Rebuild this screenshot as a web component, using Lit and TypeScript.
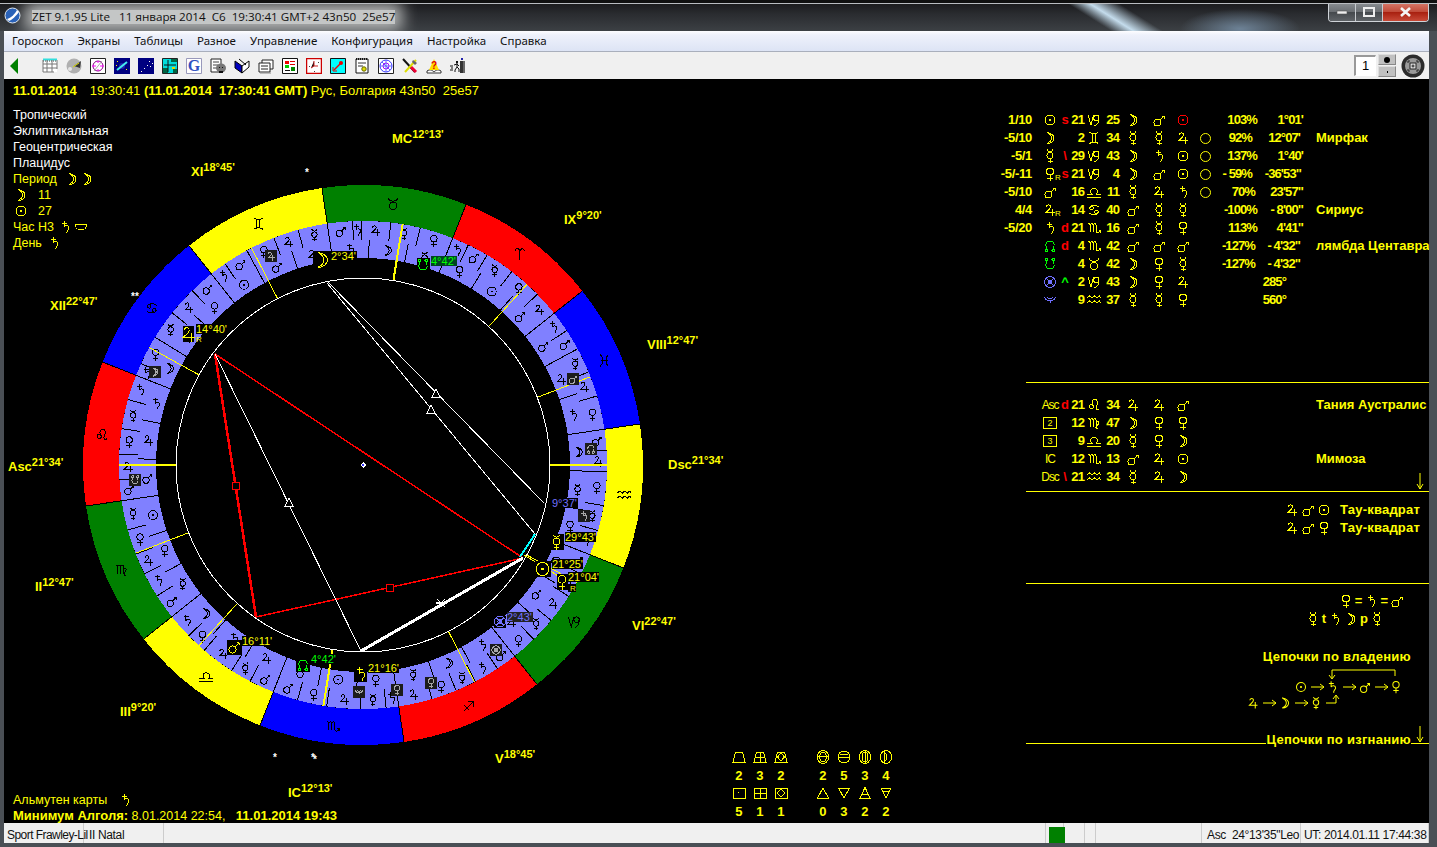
import { LitElement, html, css, svg } from "lit";
import { customElement } from "lit/decorators.js";

const G: Record<string, any> = {
  sun: svg`<circle cx="6" cy="7" r="5"/><rect x="5" y="6" width="2" height="2" fill="currentColor" stroke="none"/>`,
  moon: svg`<path d="M3 1.5C8 2 10 5 10 7C10 10 7 12.5 3 12.5C6 11 7.5 9 7.5 7C7.5 5 6 3 3 1.5Z"/>`,
  mercury: svg`<circle cx="6" cy="6.5" r="3"/><path d="M3 .5C4 3.2 8 3.2 9 .5M6 9.5V14M3.5 12H8.5"/>`,
  venus: svg`<circle cx="6" cy="4.5" r="3.5"/><path d="M6 8V14M3 11H9"/>`,
  mars: svg`<circle cx="4.5" cy="9.5" r="3.5"/><path d="M7 7L11 3M8.5 3H11V5.5"/>`,
  jupiter: svg`<path d="M2.5 4C2.5 1.5 6.5 1 6.5 4C6.5 6 4 7.5 2 9.5H11M8.5 6V13"/>`,
  saturn: svg`<path d="M2.5 3H8M5 .5V7C6 5 10 5 10 8C10 10 7 11 8 13.5"/>`,
  nn: svg`<path d="M3.5 11C1 8 1 2 6 2C11 2 11 8 8.5 11"/><circle cx="2.7" cy="11.5" r="1.3"/><circle cx="9.3" cy="11.5" r="1.3"/>`,
  sn: svg`<path d="M3.5 3C1 6 1 12 6 12C11 12 11 6 8.5 3"/><circle cx="2.7" cy="2.5" r="1.3"/><circle cx="9.3" cy="2.5" r="1.3"/>`,
  wheel: svg`<circle cx="6" cy="7" r="5.5"/><circle cx="6" cy="7" r="2"/><path d="M2 3L10 11M10 3L2 11"/>`,
  bm: svg`<path d="M.5 4C1.5 9 10.5 9 11.5 4M3 4C4 6.5 8 6.5 9 4M6 8V10"/>`,
  aries: svg`<path d="M6 13V5C6 1 1 1 1.5 4.5M6 5C6 1 11 1 10.5 4.5"/>`,
  taurus: svg`<circle cx="6" cy="9" r="3.7"/><path d="M1 1C2 5.5 10 5.5 11 1"/>`,
  gemini: svg`<path d="M1.5 1.5C4 3 8 3 10.5 1.5M1.5 12.5C4 11 8 11 10.5 12.5M4.5 2.5V11.5M7.5 2.5V11.5"/>`,
  cancer: svg`<circle cx="3.5" cy="5" r="1.8"/><circle cx="8.5" cy="9" r="1.8"/><path d="M1.7 5C2 2 8 1.5 11 4M10.3 9C10 12 4 12.5 1 10"/>`,
  leo: svg`<circle cx="3.5" cy="8.5" r="2"/><path d="M5 7.5C3 3 5 1.5 7 1.5C10 1.5 10 5 8.5 8C8 10 8 12.5 11 11"/>`,
  virgo: svg`<path d="M0 3C1 2 2 3 2 4V11M2 4C3 2 5 2 5 4V11M5 4C6 2 8 2 8 4V10C8 12 9 13 10 13M8 6C11 4 12 8 7 12"/>`,
  libra: svg`<path d="M-1 12H13M-1 9H3.5C2 7 2.5 3.5 6 3.5C9.5 3.5 10 7 8.5 9H13"/>`,
  scorpio: svg`<path d="M0 3C1 2 2 3 2 4V11M2 4C3 2 5 2 5 4V11M5 4C6 2 8 2 8 4V10C8 12.5 10 12.5 12 10.5M10.5 9.5H12.5V11.5"/>`,
  sag: svg`<path d="M2 12L11 3M6 2.5H11.5V8M3 6L8 11"/>`,
  capricorn: svg`<path d="M0 2L3 12L5.5 2"/><circle cx="8.3" cy="5" r="2.7"/><path d="M11 5C11 9 9 12 6.5 13"/>`,
  aquarius: svg`<path d="M-1 5L1.5 3L4 5L6.5 3L9 5L11.5 3L13 5M-1 10L1.5 8L4 10L6.5 8L9 10L11.5 8L13 10"/>`,
  pisces: svg`<path d="M2 1C5 4 5 10 2 13M10 1C7 4 7 10 10 13M2.5 7H9.5"/>`,
  cup: svg`<path d="M0 4H12C12 8 9 10 6 10C3 10 0 8 0 4Z"/>`,
  ang1: svg`<path d="M2.5 2H9.5L12 12H0Z"/>`,
  ang2: svg`<path d="M2.5 2H9.5L12 12H0ZM6 2V12M1 7H11"/>`,
  ang3: svg`<path d="M2.5 2H9.5L12 12H0ZM6 3L9.5 7L6 11L2.5 7Z"/>`,
  sq1: svg`<path d="M0 2H12V12H0Z"/><rect x="5" y="6" width="1" height="1" fill="currentColor" stroke="none"/>`,
  sq2: svg`<path d="M0 2H12V12H0ZM6 2V12M0 7H12"/>`,
  sq3: svg`<path d="M0 2H12V12H0ZM6 3L10 7L6 11L2 7Z"/>`,
  e1: svg`<ellipse cx="6" cy="7" rx="5.5" ry="6.5"/><ellipse cx="6" cy="7" rx="3.5" ry="4.5"/><path d="M1 6H11"/>`,
  e2: svg`<ellipse cx="6" cy="7" rx="6" ry="6"/><path d="M0 7H12M2 4H10"/>`,
  e3: svg`<ellipse cx="6" cy="7" rx="5.5" ry="6.5"/><ellipse cx="6" cy="7" rx="3" ry="5"/><path d="M6 .5V13.5"/>`,
  e4: svg`<ellipse cx="6" cy="7" rx="5.5" ry="6.5"/><path d="M4 1V13M4 3C8 4 8 10 4 11"/>`,
  t1: svg`<path d="M6 2L.5 12H11.5Z"/>`,
  t2: svg`<path d="M.5 2H11.5L6 12Z"/>`,
  t3: svg`<path d="M6 1.5L1 12H11ZM3 8H9"/>`,
  t4: svg`<path d="M1 2H11L6 12ZM2.5 5H9.5"/>`,
};

const g = (n: string, cx: number, cy: number, s: number, color: string) => svg`
  <g transform="translate(${cx - 6 * s} ${cy - 7 * s}) scale(${s})" fill="none" stroke="${color}" stroke-width="${1 / s}" style="color:${color}">${G[n]}</g>`;

const ico = (n: string, color = "#ffff00", s = 1) => html`<svg class="gl" width="${Math.round(14 * s)}" height="${Math.round(14 * s)}" viewBox="-1 0 14 14"><g fill="none" stroke="${color}" stroke-width="${1 / s}" style="color:${color}">${G[n]}</g></svg>`;

const ASC = 141.57;
const CX = 363, CY = 465;
const pt = (lon: number, r: number): [number, number] => {
  const t = ((180 + lon - ASC) * Math.PI) / 180;
  return [CX + r * Math.cos(t), CY - r * Math.sin(t)];
};
const sector = (a: number, b: number, r0: number, r1: number) => {
  const [x0, y0] = pt(a, r1), [x1, y1] = pt(b, r1), [x2, y2] = pt(b, r0), [x3, y3] = pt(a, r0);
  return `M${x0} ${y0}A${r1} ${r1} 0 0 0 ${x1} ${y1}L${x2} ${y2}A${r0} ${r0} 0 0 1 ${x3} ${y3}Z`;
};

const SIGNS = ["aries", "taurus", "gemini", "cancer", "leo", "virgo", "libra", "scorpio", "sag", "capricorn", "aquarius", "pisces"];
const SIGNCOL = ["#ff0000", "#008000", "#ffff00", "#0000ff"];
const TERMS: [string, number][][] = [
  [["jupiter", 6], ["venus", 8], ["mercury", 7], ["mars", 5], ["saturn", 4]],
  [["venus", 8], ["mercury", 7], ["jupiter", 7], ["saturn", 2], ["mars", 6]],
  [["mercury", 7], ["jupiter", 6], ["venus", 7], ["mars", 6], ["saturn", 4]],
  [["mars", 6], ["jupiter", 7], ["mercury", 7], ["venus", 7], ["saturn", 3]],
  [["saturn", 6], ["mercury", 7], ["venus", 6], ["jupiter", 6], ["mars", 5]],
  [["mercury", 7], ["venus", 6], ["jupiter", 5], ["saturn", 6], ["mars", 6]],
  [["saturn", 6], ["venus", 5], ["jupiter", 8], ["mercury", 5], ["mars", 6]],
  [["mars", 6], ["venus", 7], ["jupiter", 8], ["mercury", 6], ["saturn", 3]],
  [["jupiter", 8], ["venus", 6], ["mercury", 5], ["saturn", 6], ["mars", 5]],
  [["venus", 6], ["mercury", 6], ["jupiter", 7], ["saturn", 6], ["mars", 5]],
  [["saturn", 6], ["mercury", 6], ["venus", 8], ["jupiter", 5], ["mars", 5]],
  [["venus", 8], ["jupiter", 6], ["mercury", 6], ["mars", 5], ["saturn", 5]],
];
const DECANS = [
  ["mars", "sun", "venus"], ["mercury", "moon", "saturn"], ["jupiter", "mars", "sun"], ["venus", "mercury", "moon"],
  ["saturn", "jupiter", "mars"], ["sun", "venus", "mercury"], ["moon", "saturn", "jupiter"], ["mars", "sun", "venus"],
  ["mercury", "moon", "saturn"], ["jupiter", "mars", "sun"], ["venus", "mercury", "moon"], ["saturn", "jupiter", "mars"],
];
const CUSPS: [number, number][] = [
  [141.57, 2], [321.57, 2], [42.22, 2], [222.22, 2], [78.75, 1], [112.78, 1], [162.78, 1], [189.33, 1], [9.33, 1], [342.78, 1], [292.78, 1], [258.75, 1],
];
const HOUSE: [string, string, number, number][] = [
  ["MC", "12°13'", 392, 143], ["XI", "18°45'", 191, 176], ["IX", "9°20'", 564, 224], ["VIII", "12°47'", 647, 349],
  ["XII", "22°47'", 50, 310], ["Asc", "21°34'", 8, 471], ["Dsc", "21°34'", 668, 469], ["II", "12°47'", 35, 591],
  ["VI", "22°47'", 632, 630], ["III", "9°20'", 120, 716], ["V", "18°45'", 495, 763], ["IC", "12°13'", 288, 797],
];

type Row = { l?: any; p?: any; pc?: string; f?: string; fc?: string; d: string; s: string; m: string; a: any[]; c?: boolean; pct?: string; pp?: number; t?: string; tp?: number; n?: string };
const RR = (n: string) => html`<span class="withr">${ico(n)}<small>R</small></span>`;
const ROWS: Row[] = [
  { l: "1/10", p: "sun", f: "s", d: "21", s: "capricorn", m: "25", a: ["moon", "mars", "sunred"], pct: "103%", t: "1°01'" },
  { l: "-5/10", p: "moon", d: "2", s: "gemini", m: "34", a: ["mercury", "mercury", "jupiter"], c: true, pct: "92%", pp: 5, t: "12°07'", tp: 3, n: "Мирфак" },
  { l: "-5/1", p: "mercury", f: "\\", d: "29", s: "capricorn", m: "43", a: ["moon", "saturn", "sun"], c: true, pct: "137%", t: "1°40'" },
  { l: "-5/-11", p: RR("venus"), f: "s", d: "21", s: "capricorn", m: "4", a: ["moon", "mars", "sun"], c: true, pct: "- 59%", pp: 5, t: "-36'53\"", tp: 2 },
  { l: "-5/10", p: "mars", d: "16", s: "libra", m: "11", a: ["mercury", "jupiter", "saturn"], c: true, pct: "70%", pp: 2, t: "23'57\"" },
  { l: "4/4", p: RR("jupiter"), d: "14", s: "cancer", m: "40", a: ["mars", "mercury", "mercury"], pct: "-100%", t: "- 8'00\"", n: "Сириус" },
  { l: "-5/20", p: "saturn", f: "d", d: "21", s: "scorpio", m: "16", a: ["mars", "mercury", "venus"], pct: "113%", t: "4'41\"" },
  { p: "nn", pc: "#00ff00", f: "d", d: "4", s: "scorpio", m: "42", a: ["mars", "mars", "mars"], pct: "-127%", pp: 2, t: "- 4'32\"", tp: 3, n: "лямбда Центавра" },
  { p: "sn", pc: "#00ff00", d: "4", s: "taurus", m: "42", a: ["moon", "venus", "mercury"], pct: "-127%", pp: 2, t: "- 4'32\"", tp: 3 },
  { p: "wheel", pc: "#7070ff", f: "^", fc: "#00ff00", d: "2", s: "capricorn", m: "43", a: ["moon", "venus", "jupiter"], t: "285°", tp: 17 },
  { p: "bm", pc: "#7070ff", d: "9", s: "aquarius", m: "37", a: ["mercury", "mercury", "venus"], t: "560°", tp: 17 },
];
const lbl = (t: string) => html`<span class="asc">${t}</span>`;
const box = (t: string) => html`<span class="bx">${t}</span>`;
const ROWS2: Row[] = [
  { p: lbl("Asc"), f: "d", d: "21", s: "leo", m: "34", a: ["jupiter", "jupiter", "mars"], n: "Тания Аустралис" },
  { p: box("2"), d: "12", s: "virgo", m: "47", a: ["moon", "venus", "venus"] },
  { p: box("3"), d: "9", s: "libra", m: "20", a: ["mercury", "venus", "moon"] },
  { p: lbl("IC"), d: "12", s: "scorpio", m: "13", a: ["mars", "jupiter", "sun"], n: "Мимоза" },
  { p: lbl("Dsc"), f: "\\", d: "21", s: "aquarius", m: "34", a: ["mercury", "jupiter", "moon"] },
];

const TB = [
  svg`<path d="M1 2H15V14H1Z" fill="#fff"/><path d="M1 1.5H15" stroke="#33dddd" stroke-width="2"/><path d="M1 3H15" stroke="#444" stroke-dasharray="1 1"/><path d="M1 2V14M5 2V14M10 2V14M15 2V11M1 6H15M1 10H15M1 14H12" stroke="#777"/>`,
  svg`<circle cx="8" cy="8" r="7.5" fill="#b0b0b0"/><path d="M8 8L15 3L14 10Z" fill="#333"/><path d="M7 9L13 5" stroke="#dd0"/><circle cx="4" cy="11" r="2" fill="#e4e4e4"/>`,
  svg`<path d="M.5 .5H15.5V15.5H.5Z" fill="#fff" stroke="#222"/><circle cx="8" cy="8" r="5" fill="none" stroke="#808"/><path d="M2 8H6M10 8H14M8 3V5M8 11V13" stroke="#f0f"/><path d="M4 13L12 3" stroke="#aaa"/>`,
  svg`<path d="M0 0H16V16H0Z" fill="#000080"/><ellipse cx="8" cy="8" rx="3" ry="3" fill="#22a"/><path d="M3 12L13 4" stroke="#4ee" stroke-width="2"/><path d="M3 3h1v1h-1zM12 11h1v1h-1zM2 7h1v1h-1z" fill="#ff0"/>`,
  svg`<path d="M0 0H16V16H0Z" fill="#000080"/><path d="M11 3h1v1h-1zM14 5h1v1h-1zM9 7h1v1h-1zM6 10h1v1h-1zM3 13h1v1h-1zM12 8h1v1h-1z" fill="#ffe"/>`,
  svg`<path d="M.5 .5H15.5V15.5H.5Z" fill="#00dddd" stroke="#222"/><path d="M1 10H6V15H1ZM11 11H15V15H11ZM9 1H15V4H9Z" fill="#064"/><path d="M2 7H14M6 2V14" stroke="#111"/><path d="M10 9h3v2h-3z" fill="#dd0"/>`,
  svg`<path d="M.5 .5H15.5V15.5H.5Z" fill="#fff" stroke="#99b"/><text x="8" y="13" class="tbg">G</text>`,
  svg`<path d="M1 1H11V14H1Z" fill="#fff" stroke="#222"/><path d="M3 4H9M3 7H8M3 10H7" stroke="#444"/><ellipse cx="11" cy="10" rx="5" ry="4.5" fill="#777"/><path d="M9 9h1v1h-1zM12 9h1v1h-1zM9 13H13V15H9Z" fill="#111"/>`,
  svg`<path d="M1 3L8 8V15L1 10Z" fill="#0000c0" stroke="#000"/><path d="M8 8L15 3V9L8 15Z" fill="#fff" stroke="#000"/><path d="M5 1L12 7" stroke="#000" stroke-width="1"/>`,
  svg`<path d="M4 2H15V11H4Z" fill="#fff" stroke="#222"/><path d="M1 5H12V14H1Z" fill="#fff" stroke="#222"/><path d="M3 8H10M3 11H10" stroke="#222"/><path d="M2 15H13" stroke="#888"/>`,
  svg`<path d="M.5 .5H15.5V15.5H.5Z" fill="#fff" stroke="#111"/><path d="M3 3H7V6H3Z" fill="#e00"/><path d="M3 7H7V10H3Z" fill="#0c0"/><path d="M8 3H13V4H8ZM8 6H13V7H8Z" fill="#d00"/><path d="M3 12H8V13H3Z" fill="#111"/><path d="M9 9H13V13H9Z" fill="#080"/>`,
  svg`<path d="M.5 .5H15.5V15.5H.5Z" fill="#fff" stroke="#c00" stroke-width="1.5"/><path d="M8 3V8L5 10M8 8H12" stroke="#c22"/><path d="M3 8h1v1h-1zM12 4h1v1h-1zM8 13h1v1h-1z" fill="#444"/>`,
  svg`<path d="M.5 .5H15.5V15.5H.5Z" fill="#00ffff" stroke="#111"/><path d="M4 12L11 5" stroke="#e00" stroke-width="1.5"/><circle cx="11" cy="5" r="2" fill="#e00"/><path d="M3 9V13H7" stroke="#e00" fill="none"/>`,
  svg`<path d="M2 1H14V15H2Z" fill="#fff" stroke="#111"/><path d="M2 1h12" stroke="#111" stroke-dasharray="1 1" stroke-width="2"/><path d="M4 5H12M4 8H9" stroke="#333"/><circle cx="10" cy="11" r="2.2" fill="#dd0" stroke="#660"/>`,
  svg`<path d="M.5 .5H15.5V15.5H.5Z" fill="#fff" stroke="#222"/><circle cx="8" cy="8" r="6" fill="none" stroke="#33f"/><circle cx="8" cy="8" r="3" fill="none" stroke="#a0f"/><path d="M2 8H14M8 2V14M4 4L12 12" stroke="#66f"/>`,
  svg`<path d="M1 1L13 14" stroke="#111" stroke-width="2"/><path d="M9 9L14 14" stroke="#e03" stroke-width="3"/><path d="M14 2L3 14" stroke="#dd0" stroke-width="2"/><path d="M11 2L15 5L13 7L10 4Z" fill="#666"/>`,
  svg`<path d="M1 13C4 11 6 12 8 14C10 12 12 11 15 13V15H1Z" fill="#fff" stroke="#333"/><path d="M3 12L8 1L13 12Z" fill="#fd0"/><text x="8" y="11" class="tbq">?</text>`,
  svg`<path d="M10 3H15V15H10Z" fill="#666"/><path d="M10 3H13V15H10Z" fill="#333"/><path d="M11 0H13V2H11Z" fill="#22a"/><rect x="6" y="3" width="2" height="2" fill="#111"/><path d="M7 5V9L9 11V14M7 9L5 12V14M7 6L4 7M7 6L9 8M0 8H3M1 10H3M0 12H3" stroke="#111" fill="none"/>`,
];

const CHART_BOX: [string, number, number, number, number, number, string][] = [
  ["jupiter", 188.5, 334, 11, 16, 1.25, "#ffff00"],
  ["mars", 234, 647, 15, 15, 1.05, "#ffff00"],
  ["saturn", 360.5, 674, 13, 15, 1.05, "#ffff00"],
  ["nn", 303, 665, 14, 14, 1, "#00ff00"],
  ["sn", 423, 265, 13, 14, 1, "#00ff00"],
  ["sun", 542.5, 569, 16, 16, 1.3, "#ffff00"],
  ["mercury", 556.5, 542, 14, 16, 1.1, "#ffff00"],
  ["venus", 562, 582, 11, 16, 1.1, "#ffff00"],
  ["wheel", 500, 621.5, 12, 12, 1, "#7070ff"],
];
const CHART_LBL: [string, number, number, string, string][] = [
  ["2°34'", 331, 256, "#ffff00", "#000"],
  ["14°40'", 196, 329, "#ffff00", "#000"],
  ["16°11'", 242, 641, "#ffff00", "#000"],
  ["21°16'", 368, 668, "#ffff00", "#000"],
  ["4°42'", 311, 659, "#00ff00", "#000"],
  ["4°42'", 431, 261, "#00ff00", "#042"],
  ["21°25'", 552, 564, "#ffff00", "#000"],
  ["29°43'", 565, 537, "#ffff00", "#000"],
  ["21°04'", 568, 577, "#ffff00", "#000"],
  ["2°43'", 507, 617, "#7070ff", "#222"],
  ["9°37'", 552, 503, "#7070ff", "#000"],
];
const GREY: [string, number, number][] = [
  ["jupiter", 271, 256], ["moon", 155, 372], ["mars", 573, 379], ["nn", 591, 449], ["sn", 135, 480],
  ["saturn", 584, 516], ["wheel", 496, 650], ["venus", 431, 683], ["venus", 397, 690], ["bm", 359, 692],
];

const arrow = (x: number, y: number, len = 13) => svg`<path d="M${x} ${y}H${x + len}M${x + len - 4} ${y - 3}L${x + len} ${y}L${x + len - 4} ${y + 3}" fill="none" stroke="#ff0"/>`;

@customElement("app-root")
export class AppRoot extends LitElement {
  static styles = css`
    :host { display: block; width: 1437px; height: 847px; overflow: hidden; background: #4a4f55; font-family: "Liberation Sans", Arial, sans-serif; }
    .window { display: flex; flex-direction: column; height: 847px; }
    .title { height: 31px; flex: none; display: flex; align-items: flex-start; position: relative; overflow: hidden;
      background:
        linear-gradient(32deg, transparent 75%, #c4dcec 76.5%, transparent 78.5%),
        radial-gradient(ellipse 60px 20px at 1240px 26px, #6d8296, transparent),
        linear-gradient(#1a1a1c, #2a2c30 40%, #3c4044 100%);
      border-top: 3px solid #101010; box-sizing: border-box; }
    .title::before { content: ""; position: absolute; left: 0; right: 0; top: 0; height: 1px; background: #b9bcc0; }
    .ticon { margin: 4px 0 0 4px; flex: none; position: relative; z-index: 1; }
    .ttext { margin: 7px 0 0 11px; font: 11.65px/14px "Open Sans", "Liberation Sans", sans-serif; color: #111; white-space: pre; background: #c4c6c6; box-shadow: 0 0 16px 7px #b8baba; }
    .winbtns { margin-left: auto; margin-right: 8px; display: flex; height: 18px; border: 1px solid #cfd3d8; border-top: none; border-radius: 0 0 4px 4px; overflow: hidden; }
    .wb { display: flex; align-items: center; justify-content: center; border-right: 1px solid #c8ccd0; background: linear-gradient(#8a8e92, #6a6e72 50%, #45494d 52%, #5f6367); }
    .wb.min { width: 26px; } .wb.max { width: 26px; }
    .wb.close { width: 45px; border: none; background: linear-gradient(#d8796a, #c04a38 50%, #a82010 52%, #c84a38); }
    .client { flex: 1; min-height: 0; display: flex; flex-direction: column; margin: 0 8px 4px 4px; }
    .menu { height: 20px; flex: none; display: flex; gap: 14px; align-items: center; padding-left: 8px; background: linear-gradient(#fdfdff 0%, #eef1fb 20%, #dde4f5 100%); border-bottom: 1px solid #a9afbc; font: 11.5px/22px "Noto Sans", sans-serif; color: #111; }
    .tools { height: 27px; flex: none; box-sizing: border-box; display: flex; align-items: center; gap: 8px; padding: 0 4px 0 6px; background: #f0f0f0; }
    .back { margin-right: 16px; }
    .tbtn { flex: none; }
    .tbg { font: bold 16px "Liberation Serif", serif; fill: #3050c0; text-anchor: middle; }
    .tbq { font: bold 10px "Liberation Sans", sans-serif; fill: #d00; text-anchor: middle; }
    .tright { margin-left: auto; display: flex; align-items: center; gap: 2px; }
    .spin-input { width: 22px; height: 21px; box-sizing: border-box; background: #fff; border-right: 1px solid #fff; border-bottom: 1px solid #fff; border-left: 2px solid #999; border-top: 2px solid #999; font: 13px/18px "Liberation Sans", sans-serif; text-align: center; color: #000; }
    .spin { display: flex; flex-direction: column; gap: 1px; width: 18px; }
    .spin i { display: flex; height: 11px; align-items: center; justify-content: center; background: #c0c0c0; border: 1px solid #ddd; border-right-color: #888; border-bottom-color: #888; box-sizing: border-box; }
    .spin b { display: block; width: 6px; height: 6px; border-radius: 50%; background: #000; }
    .spin u { display: block; width: 1px; height: 2px; background: #000; }
    .round { margin-left: 3px; flex: none; }
    .main { flex: 1; min-height: 0; display: flex; background: #000; color: #ff0; overflow: hidden; }
    .pane { width: 996px; flex: none; position: relative; display: flex; flex-direction: column; justify-content: space-between; font-size: 12px; }
    .chart { position: absolute; left: 0; top: 0; width: 996px; height: 744px; }
    .chart * { shape-rendering: crispEdges; }
    .chart text, .chain text { shape-rendering: auto; }
    .hl { font: bold 13px "Liberation Sans", sans-serif; fill: #ff0; }
    .hl tspan.sup { font-size: 11px; }
    .lb { font: 11px "Liberation Sans", sans-serif; }
    .rtiny { font: 8px "Liberation Sans", sans-serif; }
    .star { font: bold 10px "Liberation Sans", sans-serif; fill: #fff; }
    .over { position: relative; padding: 4px 0 0 9px; }
    .date { font-size: 13px; line-height: 16px; white-space: pre; }
    .date b { font-weight: bold; letter-spacing: -0.06px; }
    .date .t { margin-left: 13px; }
    .info { margin-top: 8px; font-size: 12.5px; line-height: 16px; }
    .info div { display: flex; align-items: center; height: 16px; }
    .wt { color: #fff; }
    .gl { shape-rendering: crispEdges; flex: none; display: block; overflow: visible; }
    .foot { position: relative; display: flex; justify-content: space-between; align-items: flex-end; padding: 0 104px 3px 9px; }
    .footl { font-size: 12.5px; line-height: 16px; margin-bottom: -4px; }
    .footl div { display: flex; align-items: center; height: 16px; white-space: pre; }
    .footl b { font-size: 13px; }
    .mini { display: grid; grid-template-columns: repeat(8, 21px); grid-auto-rows: 18px; justify-items: center; align-items: center; font: bold 13px "Liberation Sans", sans-serif; letter-spacing: -0.5px; }
    .right { width: 429px; flex: none; font: bold 13px/18px "Liberation Sans", sans-serif; }
    .sec { position: relative; margin-left: 26px; border-bottom: 1px solid #ff0; box-sizing: content-box; }
    .sec .in { margin-left: -26px; }
    .s1 { height: 271px; padding-top: 32px; }
    .s2 { height: 95px; padding-top: 13px; }
    .s3 { height: 82px; padding-top: 9px; }
    .s4 { height: 151px; padding-top: 8px; }
    .row { display: grid; height: 18px; align-items: center; grid-template-columns: 33px 8px 18px 12px 13px 20px 15px 28px 24px 24px 20px 42px 46px 13px 113px; white-space: nowrap; }
    .num { letter-spacing: -0.9px; text-align: right; }
    .num.lab { letter-spacing: -0.35px; padding-right: 1px; }
    .cen { display: flex; justify-content: center; }
    .flag { text-align: center; color: #f00; }
    .nm { overflow: hidden; font-size: 13px; }
    .withr { position: relative; display: block; }
    .withr small { position: absolute; left: 12px; top: 6px; font: 8px "Liberation Sans", sans-serif; color: #ff0; }
    .asc { font: 12px "Liberation Sans", sans-serif; letter-spacing: -1.1px; }
    .bx { display: block; width: 12px; height: 10px; border: 1px solid #ff0; font: 9px/10px "Liberation Sans", sans-serif; text-align: center; }
    .circ { width: 9px; height: 9px; border: 1px solid #ff0; border-radius: 50%; box-sizing: content-box; }
    .arr { position: absolute; right: 3px; }
    .tau { display: flex; justify-content: flex-end; align-items: center; gap: 2px; height: 18px; padding-right: 9px; letter-spacing: .2px; }
    .tau span { margin-left: 7px; }
    .rel { display: flex; justify-content: flex-end; align-items: center; gap: 2px; height: 18px; }
    .r1 { padding-right: 25px; }
    .r2 { padding-right: 45px; }
    .h { text-align: right; padding-right: 18px; margin-top: 20px; letter-spacing: .27px; }
    .chain { display: block; margin: -2px 0 0 200px; }
    .h5 { position: absolute; right: 18px; bottom: -5px; background: #000; padding: 0 0 0 1px; line-height: 16px; letter-spacing: .27px; }
    .status { height: 20px; flex: none; display: flex; background: #f0f0f0; font: 12px/24px "Liberation Sans", sans-serif; color: #111; letter-spacing: -0.35px; white-space: pre; overflow: hidden; }
    .status div { border-right: 1px solid #ccc; box-sizing: border-box; padding-left: 3px; }
    .status .s1st { letter-spacing: -0.55px; }
    .status .s2nd { padding-left: 5px; }
    .status .green { padding: 4px 0 0 3px; }
    .status .green i { display: block; width: 16px; height: 16px; background: #008000; }
    .status .fill { flex: 1; border: none; }
    .status .asc2 { padding-left: 5px; }
  `;

  cell(r: Row) {
    const col = (a: string) => (a === "sunred" ? ico("sun", "#ff0000") : ico(a));
    return html`<div class="row">
      <span class="num lab">${r.l ?? ""}</span><span></span>
      <span class="cen">${typeof r.p === "string" ? ico(r.p, r.pc ?? "#ffff00") : r.p}</span>
      <span class="flag" style="${r.fc ? `color:${r.fc}` : ""}">${r.f ?? ""}</span>
      <span class="num">${r.d}</span>
      <span class="cen">${ico(r.s, "#ffff00", 1)}</span>
      <span class="num">${r.m}</span>
      ${r.a.map((a) => html`<span class="cen">${col(a)}</span>`)}
      <span class="cen">${r.c ? html`<span class="circ"></span>` : ""}</span>
      <span class="num" style="${r.pp ? `padding-right:${r.pp}px` : ""}">${r.pct ?? ""}</span>
      <span class="num" style="${r.tp ? `padding-right:${r.tp}px` : ""}">${r.t ?? ""}</span>
      <span></span>
      <span class="nm">${r.n ?? ""}</span>
    </div>`;
  }

  wheel() {
    const rings: any[] = [];
    for (let i = 0; i < 12; i++) {
      const a = i * 30;
      rings.push(svg`<path d="${sector(a, a + 30, 244, 280)}" fill="${SIGNCOL[i % 4]}"/>`);
    }
    const parts: any[] = [];
    for (let i = 0; i < 12; i++) {
      const a = i * 30;
      let c = a;
      TERMS[i].forEach(([n, w], k) => {
        const [mx, my] = pt(c + w / 2, 235);
        parts.push(g(n, mx, my, 0.9, "#000"));
        if (k > 0) {
          const [x0, y0] = pt(c, 244), [x1, y1] = pt(c, 225.5);
          parts.push(svg`<path d="M${x0} ${y0}L${x1} ${y1}" stroke="#000"/>`);
        }
        c += w;
      });
      DECANS[i].forEach((n, k) => {
        const [mx, my] = pt(a + 5 + k * 10, 216);
        parts.push(g(n, mx, my, 0.9, "#000"));
        if (k > 0) {
          const [x0, y0] = pt(a + k * 10, 207), [x1, y1] = pt(a + k * 10, 225.5);
          parts.push(svg`<path d="M${x0} ${y0}L${x1} ${y1}" stroke="#000"/>`);
        }
      });
      const [x0, y0] = pt(a, 207), [x1, y1] = pt(a, 280);
      parts.push(svg`<path d="M${x0} ${y0}L${x1} ${y1}" stroke="#000"/>`);
      const [sx, sy] = pt(a + 15, 263);
      parts.push(g(SIGNS[i], sx, sy, 1, "#000"));
    }
    return svg`
      ${rings}
      <circle cx="${CX}" cy="${CY}" r="225.5" fill="none" stroke="#8080ff" stroke-width="37"/>
      ${parts}
      ${CUSPS.map(([l, w]) => {
        const [x0, y0] = pt(l, 187), [x1, y1] = pt(l, 244);
        return svg`<path d="M${x0} ${y0}L${x1} ${y1}" stroke="#ffff00" stroke-width="${w}"/>`;
      })}
      <circle cx="${CX}" cy="${CY}" r="187" fill="none" stroke="#fff"/>
      <path d="M215 354L523 558M256 617L523 558" stroke="#f00" stroke-width="1.5" fill="none"/>
      <path d="M215 354L256 617" stroke="#f00" stroke-width="2.5" fill="none"/>
      <path d="M215 354L361 651M327 281L544 503M327 283L535 534" stroke="#fff" fill="none"/>
      <path d="M361 651L523 558" stroke="#fff" stroke-width="3" fill="none"/>
      <path d="M520 557L535 534" stroke="#00ffff" stroke-width="2" fill="none"/>
      <path d="M524 555L537 563M549 570L558 576" stroke="#ffff00" fill="none"/>
      <rect x="232" y="482" width="7" height="7" fill="#000" stroke="#f00"/>
      <rect x="386" y="584" width="7" height="7" fill="#000" stroke="#f00"/>
      ${[[289, 502], [436, 393], [431, 409]].map(([x, y]) => svg`<path d="M${x} ${y - 4}L${x + 4} ${y + 4}H${x - 4}Z" fill="#000" stroke="#fff"/>`)}
      <path d="M437 599L445 607M445 599L437 607M436 603H446" stroke="#fff" stroke-width="1.2"/>
      <path d="M363 462L366 465L363 468L360 465Z" fill="#fff"/><rect x="362" y="464" width="2" height="2" fill="#33f"/>
      ${GREY.map(([n, x, y]) => svg`<rect x="${x - 6}" y="${y - 6}" width="12" height="12" fill="#1c1c1c"/>${g(n, x, y, 0.75, "#a8a8a8")}`)}
      <rect x="313" y="251" width="18" height="18" fill="#000"/>
      ${g("moon", 322, 260, 1.35, "#ffff00")}
      ${CHART_BOX.map(([n, x, y, w, h, s, c]) => svg`<rect x="${x - w / 2}" y="${y - h / 2}" width="${w}" height="${h}" fill="#000"/>${g(n, x, y, s, c)}`)}
      ${CHART_LBL.map(([t, x, y, c, bg]) => svg`<rect x="${x}" y="${y - 5}" width="${t.length * 5.1}" height="10" fill="${bg}"/><text x="${x}" y="${y + 4}" class="lb" fill="${c}">${t}</text>`)}
      <rect x="568" y="584" width="8" height="8" fill="#000"/>
      <text x="570" y="591" fill="#ff0" class="rtiny">R</text>
      <text x="196" y="342" fill="#ff0" class="rtiny">R</text>
      ${HOUSE.map(([a, b, x, y]) => svg`<text x="${x}" y="${y}" class="hl">${a}<tspan class="sup" dy="-5">${b}</tspan></text>`)}
      ${[[305, 176, "*"], [131, 300, "**"], [273, 761, "*"], [311, 761, "*"], [313, 763, "*"]].map(([x, y, t]) => svg`<text x="${x}" y="${y}" class="star">${t}</text>`)}
    `;
  }

  render() {
    const mini1 = ["ang1", "ang2", "ang3", "", "e1", "e2", "e3", "e4"];
    const nums1 = ["2", "3", "2", "", "2", "5", "3", "4"];
    const mini2 = ["sq1", "sq2", "sq3", "", "t1", "t2", "t3", "t4"];
    const nums2 = ["5", "1", "1", "", "0", "3", "2", "2"];
    const gr = (arr: string[]) => arr.map((n) => html`<span>${n ? ico(n) : ""}</span>`);
    const nr = (arr: string[]) => arr.map((n) => html`<span>${n}</span>`);
    return html`<div class="window">
      <div class="title">
        <svg class="ticon" width="17" height="17" viewBox="0 0 17 17"><circle cx="8.5" cy="8.5" r="7.5" fill="#2a62b8" stroke="#dfe6ee"/><path d="M3 12C7 11 11 7 13 3L15 5C12 9 8 13 5 14Z" fill="#fff"/></svg>
        <span class="ttext">ZET 9.1.95 Lite   11 января 2014  C6  19:30:41 GMT+2 43n50  25e57</span>
        <div class="winbtns">
          <div class="wb min"><svg width="12" height="6" viewBox="0 0 12 6"><rect x="1" y="2" width="10" height="3" fill="#eee" stroke="#555" stroke-width=".6"/></svg></div>
          <div class="wb max"><svg width="12" height="10" viewBox="0 0 12 10"><rect x="1" y="1" width="10" height="8" fill="none" stroke="#eee" stroke-width="2"/></svg></div>
          <div class="wb close"><svg width="13" height="10" viewBox="0 0 13 10"><path d="M2 1L11 9M11 1L2 9" stroke="#f4f4f4" stroke-width="2.6"/></svg></div>
        </div>
      </div>
      <div class="client">
        <div class="menu">${["Гороскоп", "Экраны", "Таблицы", "Разное", "Управление", "Конфигурация", "Настройка", "Справка"].map((m) => html`<span>${m}</span>`)}</div>
        <div class="tools">
          <svg class="back" width="8" height="16" viewBox="0 0 8 16"><path d="M8 0V16L0 8Z" fill="#008000"/></svg>
          ${TB.map((t) => html`<svg class="tbtn" width="16" height="16" viewBox="0 0 16 16">${t}</svg>`)}
          <div class="tright">
            <span class="spin-input">1</span>
            <span class="spin"><i><b></b></i><i><u></u></i></span>
            <svg class="round" width="24" height="24" viewBox="0 0 24 24"><circle cx="12" cy="12" r="11.5" fill="#2c2c2c"/><circle cx="12" cy="12" r="8" fill="#9a9a9a"/><path d="M7 9V7H9M15 7H17V9M17 15V17H15M9 17H7V15" fill="none" stroke="#222"/><rect x="9" y="9" width="6" height="6" fill="#ddd" stroke="#222"/><path d="M12 10.5V13.5M10.5 12H13.5" stroke="#222"/></svg>
          </div>
        </div>
        <div class="main">
          <div class="pane">
            <svg class="chart" viewBox="4 79 996 744">${this.wheel()}</svg>
            <div class="over">
              <div class="date"><b>11.01.2014</b><span class="t">19:30:41</span> <b>(11.01.2014  17:30:41 GMT)</b> Рус, Болгария 43n50  25e57</div>
              <div class="info">
                <div class="wt">Тропический</div>
                <div class="wt">Эклиптикальная</div>
                <div class="wt">Геоцентрическая</div>
                <div class="wt">Плацидус</div>
                <div>Период<span style="width:8px"></span>${ico("moon")}<span style="width:1px"></span>${ico("moon")}</div>
                <div><span style="width:1px"></span>${ico("moon")}<span style="width:10px"></span>11</div>
                <div><span style="width:1px"></span>${ico("sun")}<span style="width:10px"></span>27</div>
                <div>Час Н3<span style="width:4px"></span>${ico("saturn")}<span style="width:2px"></span>${ico("cup")}</div>
                <div>День<span style="width:5px"></span>${ico("saturn")}</div>
              </div>
            </div>
            <div class="foot">
              <div class="footl">
                <div>Альмутен карты<span style="width:11px"></span>${ico("saturn")}</div>
                <div><b>Минимум Алголя:</b> 8.01.2014 22:54,   <b>11.01.2014 19:43</b></div>
              </div>
              <div class="mini">${gr(mini1)}${nr(nums1)}${gr(mini2)}${nr(nums2)}</div>
            </div>
          </div>
          <div class="right">
            <div class="sec s1"><div class="in">${ROWS.map((r) => this.cell(r))}</div></div>
            <div class="sec s2"><div class="in">${ROWS2.map((r) => this.cell(r))}</div>
              <svg class="arr" style="bottom:1px" width="12" height="18" viewBox="0 0 12 18"><path d="M6 1V17M3 12L6 17L9 12" fill="none" stroke="#ff0"/></svg></div>
            <div class="sec s3">
              <div class="tau">${ico("jupiter")}${ico("mars")}${ico("sun")}<span>Тау-квадрат</span></div>
              <div class="tau">${ico("jupiter")}${ico("mars")}${ico("venus")}<span>Тау-квадрат</span></div>
            </div>
            <div class="sec s4">
              <div class="rel r1">${ico("venus")}<span>=</span>${ico("saturn")}<span>=</span>${ico("mars")}</div>
              <div class="rel r2">${ico("mercury")}<span>t</span>${ico("saturn")}${ico("moon")}<span>p</span>${ico("mercury")}</div>
              <div class="h">Цепочки по владению</div>
              <svg class="chain" width="200" height="46" viewBox="1226 666 200 46">
                <path d="M1332 672H1395V678M1332 672V680M1329 677L1332 681L1335 677M1326 705H1336V698M1333 701L1336 697L1339 701" fill="none" stroke="#ff0"/>
                ${g("sun", 1301, 689, 0.9, "#ff0")}${arrow(1311, 689)}
                ${g("saturn", 1332, 689, 0.9, "#ff0")}${arrow(1343, 689)}
                ${g("mars", 1365, 689, 0.9, "#ff0")}${arrow(1375, 689)}
                ${g("venus", 1396, 689, 0.9, "#ff0")}
                ${g("jupiter", 1253, 705, 0.9, "#ff0")}${arrow(1263, 705)}
                ${g("moon", 1285, 705, 0.9, "#ff0")}${arrow(1295, 705)}
                ${g("mercury", 1316, 705, 0.9, "#ff0")}
              </svg>
              <div class="h5">Цепочки по изгнанию</div>
              <svg class="arr" style="bottom:0" width="12" height="18" viewBox="0 0 12 18"><path d="M6 1V17M3 12L6 17L9 12" fill="none" stroke="#ff0"/></svg>
            </div>
          </div>
        </div>
        <div class="status">
          <div class="s1st" style="width:80px">Sport Frawley-Lil</div>
          <div class="s2nd" style="width:80px">II Natal</div>
          <div class="fill"></div>
          <div class="green" style="width:19px;border-left:1px solid #ccc"><i></i></div>
          <div style="width:21px"></div>
          <div style="width:11px"></div>
          <div style="width:106px"></div>
          <div class="asc2" style="width:99px">Asc  24°13'35"Leo</div>
          <div style="width:128px">UT: 2014.01.11 17:44:38</div>
        </div>
      </div>
    </div>`;
  }
}
